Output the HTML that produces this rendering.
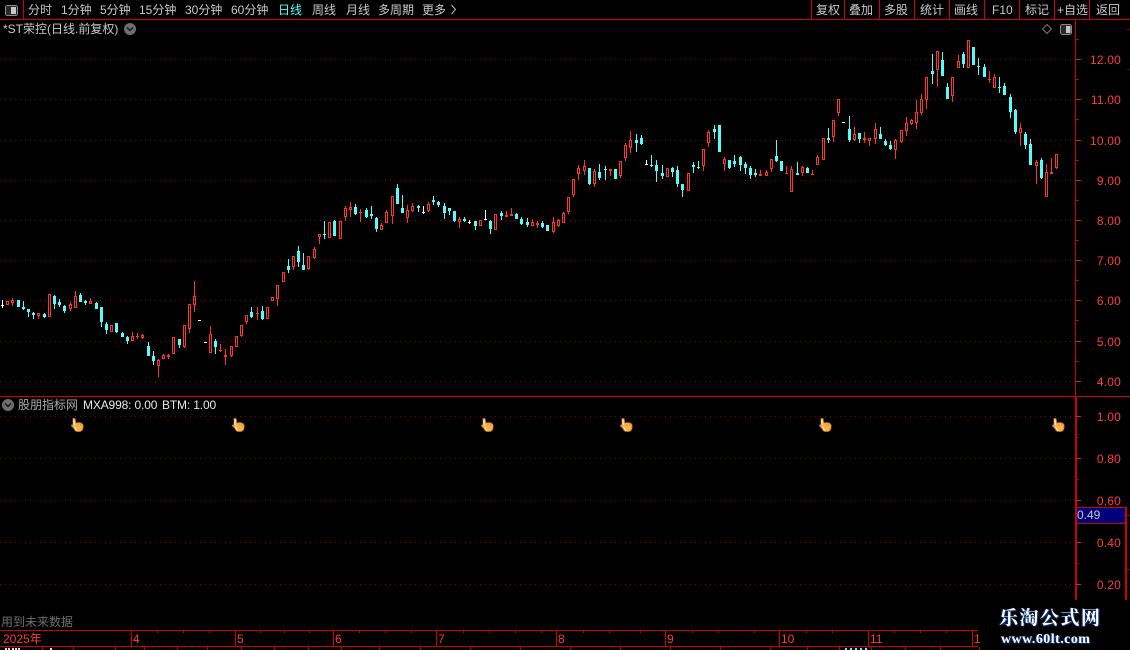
<!DOCTYPE html>
<html><head><meta charset="utf-8"><title>*ST荣控</title>
<style>
html,body{margin:0;padding:0;background:#000;width:1130px;height:650px;overflow:hidden}
body{position:relative;font-family:"Liberation Sans","WenQuanYi Zen Hei","Noto Sans CJK SC",sans-serif;font-size:12px;color:#c0c0c0}
.t{position:absolute;white-space:nowrap;line-height:14px;font-size:12px;top:3px;color:#c8c8c8}
svg{position:absolute;left:0;top:0}
.wm{position:absolute;color:#fff;font-weight:bold;white-space:nowrap;text-shadow:1px 1px 1px #123a80,-1px 0 1px #123a80}
</style></head>
<body>
<svg id="c" width="1130" height="650" viewBox="0 0 1130 650" shape-rendering="crispEdges">
<g fill="#d00000">
<rect x="0" y="19" width="1130" height="1"/>
<rect x="23" y="0" width="1" height="19"/>
<rect x="811" y="0" width="1" height="19"/><rect x="844" y="0" width="1" height="19"/><rect x="879" y="0" width="1" height="19"/><rect x="914" y="0" width="1" height="19"/><rect x="949" y="0" width="1" height="19"/><rect x="984" y="0" width="1" height="19"/><rect x="1019" y="0" width="1" height="19"/><rect x="1054" y="0" width="1" height="19"/><rect x="1089" y="0" width="1" height="19"/>
<rect x="0" y="396" width="1130" height="1"/>
<rect x="1075" y="20" width="1" height="376"/>
<rect x="1075" y="397" width="2" height="203"/>
<rect x="1125" y="507" width="2" height="93"/>
<rect x="0" y="630" width="978" height="1"/>
<rect x="0" y="646" width="978" height="1"/>
<rect x="131" y="631" width="1" height="15"/><rect x="235" y="631" width="1" height="15"/><rect x="333" y="631" width="1" height="15"/><rect x="436" y="631" width="1" height="15"/><rect x="556" y="631" width="1" height="15"/><rect x="665" y="631" width="1" height="15"/><rect x="779" y="631" width="1" height="15"/><rect x="868" y="631" width="1" height="15"/><rect x="972" y="631" width="1" height="15"/>
</g>
<g stroke="#900000" stroke-width="1" stroke-dasharray="1 4" fill="none">
<path d="M0 59.5H1075M0 99.5H1075M0 140.5H1075M0 180.5H1075M0 220.5H1075M0 260.5H1075M0 300.5H1075M0 341.5H1075M0 381.5H1075M0 416.5H1075M0 458.5H1075M0 500.5H1075M0 542.5H1075M0 584.5H1075"/>
</g>
<g id="ticks" fill="#e02020"></g>
<g id="candles"></g>
<!-- panel 0.49 box -->
<rect x="1076.5" y="507.5" width="49" height="16" fill="#00007c" stroke="#d00000"/>
<!-- top-left icon -->
<rect x="5.5" y="5.5" width="12" height="10" rx="2" fill="#2a2a2a" stroke="#8a8a8a"/>
<rect x="11" y="7" width="5" height="7" fill="#c8c8c8"/>
<g shape-rendering="auto">
<circle cx="130" cy="29" r="6" fill="#6e6e6e"/>
<path d="M127 27.5l3 3 3-3" stroke="#111" stroke-width="1.3" fill="none"/>
<circle cx="8" cy="405" r="6" fill="#6e6e6e"/>
<path d="M5 403.5l3 3 3-3" stroke="#111" stroke-width="1.3" fill="none"/>
<path d="M1047 24.5l4.5 4.5-4.5 4.5-4.5-4.5z" fill="none" stroke="#777"/>
<rect x="1060.5" y="24.5" width="11" height="10" rx="2" fill="#2a2a2a" stroke="#8a8a8a"/>
<rect x="1066" y="26" width="4.5" height="7" fill="#c8c8c8"/>
<path d="M451.5 5l4 4.500-4 4.500" stroke="#bbb" fill="none"/>
</g>
<g font-family="Liberation Sans" font-size="12" fill="#ff3c3c" text-anchor="end" letter-spacing=".2" shape-rendering="auto">
<text x="1121" y="64">12.00</text><text x="1121" y="104">11.00</text><text x="1121" y="145">10.00</text><text x="1121" y="185">9.00</text><text x="1121" y="225">8.00</text><text x="1121" y="265">7.00</text><text x="1121" y="305">6.00</text><text x="1121" y="346">5.00</text><text x="1121" y="386">4.00</text>
<text x="1121" y="421">1.00</text><text x="1121" y="463">0.80</text><text x="1121" y="505">0.60</text><text x="1121" y="547">0.40</text><text x="1121" y="589">0.20</text>
</g>
<defs>
<g id="hand" shape-rendering="auto">
<path d="M2 .5h2l.8 4.500c2-.6 5-.5 6.500.8 1 1 1 3 .5 5-.4 1.500-1.500 2.500-3 2.700H6c-1.500-.3-2.500-1.500-3-3L.5 8c-.4-1 .5-1.500 1.500-.8z" fill="#f9b24c" stroke="#c47a1a" stroke-width=".8"/>
<path d="M2.300 1.200h1.200l.4 6.300-1.500-.8zM4 8.500c.8 2 1.500 3.500 2.700 4.300l-1.500-.2-2-3z" fill="#fff2d8"/>
<path d="M7 5.800v2M9.300 6v2" stroke="#d08a2a" stroke-width=".7" fill="none"/>
</g>
</defs>
<use href="#hand" x="71" y="418"/><use href="#hand" x="232" y="418"/><use href="#hand" x="481" y="418"/><use href="#hand" x="620" y="418"/><use href="#hand" x="819" y="418"/><use href="#hand" x="1052" y="418"/>
</svg>

<span class="t" style="left:28px">分时</span>
<span class="t" style="left:61px">1分钟</span>
<span class="t" style="left:100px">5分钟</span>
<span class="t" style="left:139px">15分钟</span>
<span class="t" style="left:185px">30分钟</span>
<span class="t" style="left:231px">60分钟</span>
<span class="t" style="left:278px;color:#54fcfc">日线</span>
<span class="t" style="left:312px">周线</span>
<span class="t" style="left:346px">月线</span>
<span class="t" style="left:378px">多周期</span>
<span class="t" style="left:422px">更多</span>
<span class="t" style="left:816px">复权</span>
<span class="t" style="left:849px">叠加</span>
<span class="t" style="left:884px">多股</span>
<span class="t" style="left:920px">统计</span>
<span class="t" style="left:954px">画线</span>
<span class="t" style="left:992px">F10</span>
<span class="t" style="left:1025px">标记</span>
<span class="t" style="left:1057px">+自选</span>
<span class="t" style="left:1096px">返回</span>
<span class="t" style="left:3px;top:22px">*ST荣控(日线.前复权)</span>
<span class="t" style="left:18px;top:398px;color:#aaa">股朋指标网</span>
<span class="t" style="left:83px;top:398px;color:#e8e8e8;letter-spacing:-.15px">MXA998: 0.00</span>
<span class="t" style="left:162px;top:398px;color:#e8e8e8;letter-spacing:-.15px">BTM: 1.00</span>
<span class="t" style="left:1077px;top:508px;color:#c8c8c8">0.49</span>
<span class="t" style="left:1px;top:615px;color:#6e6e6e">用到未来数据</span>
<span class="t" style="left:3px;top:632px;color:#ff3c3c">2025年</span>
<span class="t" style="left:133px;top:632px;color:#ff3c3c">4</span>
<span class="t" style="left:237px;top:632px;color:#ff3c3c">5</span>
<span class="t" style="left:335px;top:632px;color:#ff3c3c">6</span>
<span class="t" style="left:438px;top:632px;color:#ff3c3c">7</span>
<span class="t" style="left:558px;top:632px;color:#ff3c3c">8</span>
<span class="t" style="left:667px;top:632px;color:#ff3c3c">9</span>
<span class="t" style="left:781px;top:632px;color:#ff3c3c">10</span>
<span class="t" style="left:870px;top:632px;color:#ff3c3c">11</span>
<span class="t" style="left:974px;top:632px;color:#ff3c3c">1</span>
<div class="wm" style="left:999px;top:608px;font:bold 19px/22px 'Liberation Serif','Noto Serif CJK SC',serif;letter-spacing:1.5px">乐淘公式网</div>
<div class="wm" style="left:1001px;top:632px;font:bold 14px/16px 'Liberation Serif',serif;letter-spacing:.45px">www.60lt.com</div>

<script>
var D="w 2 300 305 306 308|r 7 301 301 305 305|r 12 298 300 303 306|c 18 300 300 307 307|c 23 301 307 309 310|c 28 309 309 312 317|c 33 312 313 315 319|r 38 313 313 316 319|c 44 313 314 317 318|r 49 294 294 317 317|c 54 295 296 304 309|c 59 299 302 305 307|c 64 305 306 311 313|r 70 302 304 309 311|r 75 291 296 308 308|c 80 293 295 302 302|c 85 300 301 303 305|r 90 298 301 304 304|c 96 302 303 309 309|c 101 307 307 322 327|c 106 322 324 330 334|r 111 325 325 332 332|c 116 323 323 332 333|c 122 332 333 337 337|c 127 336 337 341 344|r 132 332 336 341 341|r 137 333 336 337 339|r 142 334 335 338 339|c 148 342 346 356 356|c 153 351 356 361 365|r 158 359 360 366 377|r 163 354 355 359 359|r 168 354 355 357 359|r 173 337 337 354 354|c 179 339 339 345 348|r 184 325 325 347 348|r 189 304 304 329 333|r 194 281 296 305 312|w 199 320 320 321 320|w 205 342 342 343 342|r 210 326 334 353 353|c 215 339 341 347 354|r 220 344 350 351 352|r 225 349 355 357 365|r 231 346 346 356 357|r 236 336 336 347 347|r 241 325 325 336 337|r 246 315 315 322 324|c 251 307 312 317 318|r 257 307 313 314 320|c 262 306 311 319 320|r 267 307 307 319 319|r 272 297 297 301 301|r 277 285 285 299 306|r 283 272 272 282 282|c 288 259 266 270 273|r 293 256 256 267 270|c 298 246 251 262 267|c 303 253 265 270 270|r 308 256 256 269 270|r 314 247 249 258 259|r 319 234 234 237 244|c 324 221 234 235 239|r 329 222 222 238 238|c 334 220 221 236 236|r 340 221 221 239 239|r 345 206 208 217 221|r 350 202 207 210 217|c 355 204 207 214 215|r 360 209 212 213 222|c 366 208 210 217 218|c 371 206 214 216 219|c 376 217 218 229 232|r 381 223 225 230 230|r 386 210 212 223 223|r 392 196 196 216 224|c 397 184 188 204 204|c 402 195 208 213 213|r 407 205 210 218 223|r 412 203 206 211 212|c 418 205 206 208 212|w 423 206 212 213 214|r 428 202 204 211 212|c 433 196 200 202 205|c 438 201 202 205 207|c 444 203 206 213 219|c 449 208 208 211 215|c 454 211 211 221 222|r 459 217 219 222 228|c 464 217 219 221 222|w 469 220 222 223 224|c 475 221 221 226 230|r 480 220 220 226 226|w 485 210 219 220 219|c 490 220 221 229 234|r 495 214 214 230 230|c 501 211 213 216 220|r 506 211 215 217 217|r 511 208 214 216 216|c 516 213 214 219 219|c 521 217 219 224 225|c 527 218 222 225 227|r 532 219 222 226 226|r 537 221 223 225 228|c 542 221 223 227 228|c 547 225 225 231 231|r 553 217 222 232 233|r 558 219 220 226 227|r 563 212 213 223 223|r 568 197 197 212 214|r 573 179 179 195 197|r 578 165 168 174 180|r 584 160 166 171 175|c 589 168 168 184 185|r 594 169 171 184 187|c 599 164 172 178 180|c 605 166 169 170 180|r 610 169 169 171 176|c 615 169 169 179 179|r 620 161 161 176 178|r 625 143 145 158 161|r 630 131 140 148 153|c 636 134 140 143 152|c 641 135 138 144 145|w 646 160 164 165 165|c 651 155 165 166 167|c 656 160 165 171 182|c 662 165 173 176 179|r 667 168 168 177 177|c 672 167 168 172 177|c 677 166 170 184 187|c 682 184 184 190 197|r 688 173 173 191 191|c 693 162 165 167 173|c 698 161 167 168 169|r 703 149 149 166 171|r 708 130 132 143 147|c 714 125 129 132 139|c 719 125 125 152 152|r 724 157 159 164 171|c 729 160 160 168 169|c 734 155 161 164 167|c 740 156 157 165 171|c 745 162 164 168 174|c 750 166 168 175 179|c 755 169 173 175 177|r 760 170 174 176 176|r 766 170 172 176 176|r 771 159 159 169 172|c 776 140 156 161 162|c 781 161 161 171 171|r 786 166 173 174 174|r 791 166 169 192 192|c 797 162 173 175 175|r 802 166 167 173 176|c 807 167 168 173 173|r 812 170 174 175 175|r 817 155 157 165 165|r 823 138 138 160 160|c 828 128 138 140 143|r 833 120 120 137 142|r 838 99 99 113 116|w 843 122 122 123 122|c 849 116 129 140 142|r 854 127 134 140 141|c 859 133 133 139 143|r 864 132 138 140 143|r 869 138 138 141 146|r 875 123 129 139 144|c 880 127 134 139 139|c 885 139 141 145 146|c 890 141 145 149 150|r 895 139 140 150 159|r 901 130 130 142 143|r 906 117 123 131 136|r 911 119 120 124 125|r 916 100 112 123 129|r 921 94 99 113 115|r 926 77 77 100 109|c 932 54 71 74 84|r 937 51 51 70 87|c 942 52 60 76 76|c 947 83 87 99 99|r 952 77 77 96 102|r 958 55 61 68 68|c 963 52 54 64 68|r 968 40 40 68 68|c 973 47 47 65 65|c 978 58 66 67 75|c 984 64 67 77 77|r 989 71 79 80 83|r 994 74 77 88 88|c 999 77 87 88 93|c 1004 83 86 95 95|c 1010 94 97 112 118|c 1015 109 110 132 134|r 1020 123 128 133 146|c 1025 132 134 145 149|c 1030 139 144 165 165|r 1036 160 162 166 184|c 1041 158 160 178 179|r 1046 164 172 197 197|r 1051 158 172 174 174|r 1056 154 154 168 169";
var col={r:'#ff3232',c:'#54fcfc',w:'#ffffff'},h='';
function R(x,y,w,he,f){return '<rect x="'+x+'" y="'+y+'" width="'+w+'" height="'+he+'" fill="'+f+'"/>';}
D.split('|').forEach(function(s){var p=s.split(' '),t=p[0],x=+p[1],wt=+p[2],bt=+p[3],bb=+p[4],wb=+p[5],c=col[t];
 if(wb>wt)h+=R(x,wt,1,wb-wt,c);
 var bh=Math.max(1,bb-bt);
 h+=R(x-1,bt,3,bh,c);
 if(t=='r'&&bh>=3)h+=R(x,bt+1,1,bh-2,'#000');
});
document.getElementById('candles').innerHTML=h;
var tk='';
[59,99,140,180,220,260,300,341,381,416,458,500,542,584].forEach(function(y){tk+=R(1076,y,5,1,'#e02020');});
[39,79,119,160,200,240,280,320,361,437,479,521,563].forEach(function(y){tk+=R(1076,y,3,1,'#c00000');});
[157,183,209,260,284,309,359,385,411,463,489,515,541,583,609,640,692,718,754,806,832,894,920,946].forEach(function(x){tk+=R(x,631,1,2,'#c00000');});
[42,73,115,144,177,207,241,274,308,341,379,420,470,520,570,620,670,720,770,807,839,871,905,940,979].forEach(function(x){tk+=R(x,647,1,3,'#c00000');});
[5,8,12,15,18,50,845,850,855,860,865].forEach(function(x,i){tk+=R(x,648,2,2,i>5?'#54fcfc':'#ddd');});
[515,569,29,69].forEach(function(y){tk+=R(1127,y,3,1,'#800000');});
document.getElementById('ticks').innerHTML=tk;
</script>
</body></html>
